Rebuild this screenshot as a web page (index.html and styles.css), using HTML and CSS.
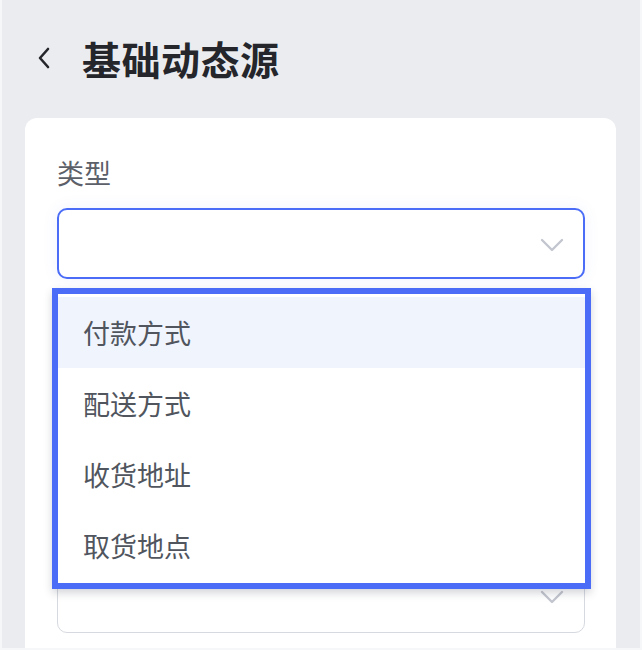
FILE: index.html
```html
<!DOCTYPE html>
<html lang="zh-CN">
<head>
  <meta charset="UTF-8" />
  <title>基础动态源</title>
  <link rel="stylesheet" href="styles.css">
</head>
<body>

<header class="topbar">
  <button class="back" aria-label="返回">
    <svg width="16" height="22" viewBox="0 0 16 22">
      <path d="M12 2 L4 11 L12 20" fill="none" stroke="#24262b" stroke-width="2.6" stroke-linecap="round" stroke-linejoin="round"/>
    </svg>
  </button>
  <h1>基础动态源</h1>
</header>

<div class="card">
  <div class="field">
    <label class="label">类型</label>
    <div class="select focused">
      <svg class="arrow" width="24" height="14" viewBox="0 0 24 14">
        <path d="M2 2 L12 12 L22 2" fill="none" stroke="#c3c6cf" stroke-width="2.4" stroke-linecap="round" stroke-linejoin="round"/>
      </svg>
    </div>
  </div>

  <div class="field field-next">
    <div class="select">
      <svg class="arrow" width="24" height="14" viewBox="0 0 24 14">
        <path d="M2 2 L12 12 L22 2" fill="none" stroke="#c3c6cf" stroke-width="2.4" stroke-linecap="round" stroke-linejoin="round"/>
      </svg>
    </div>
  </div>

  <!-- 下拉菜单 -->
  <ul class="dropdown">
    <li class="active">付款方式</li>
    <li>配送方式</li>
    <li>收货地址</li>
    <li>取货地点</li>
  </ul>
</div>

</body>
</html>
```

FILE: styles.css
```css
* {
  box-sizing: border-box;
}
body {
  margin: 0;
  width: 642px;
  height: 650px;
  overflow: hidden;
  background: #ebecf0;
  border: 2px solid #f6f7f9;
  border-top: none;
  font-family: "Noto Sans CJK SC", "Noto Sans", sans-serif;
  color: #24262b;
}
.topbar {
  display: flex;
  align-items: center;
  height: 118px;
  padding: 0 0 2px 34px;
}
.back {
  background: none;
  border: none;
  padding: 0;
  width: 16px;
  height: 22px;
  margin-right: 30px;
  display: flex;
}
.topbar h1 {
  margin: 0;
  font-size: 39px;
  font-weight: 700;
  line-height: 1;
  letter-spacing: 0.5px;
  color: #24262b;
}
.card {
  position: relative;
  background: #fff;
  margin: 0 24px 0 23px;
  border-radius: 12px 12px 0 0;
  padding: 37px 31px 40px 32px;
  height: 530px;
}
.label {
  display: block;
  font-size: 27px;
  line-height: 36px;
  color: #5c6068;
  margin-bottom: 17px;
}
.select {
  position: relative;
  height: 71px;
  border: 1px solid #d6d9e0;
  border-radius: 10px;
  background: #fff;
}
.select.focused {
  border: 2px solid #4a6cf6;
  box-shadow: 0 0 16px rgba(74, 108, 246, 0.08);
}
.arrow {
  position: absolute;
  right: 20px;
  top: 29px;
}
.focused .arrow {
  right: 19px;
  top: 28px;
}
.field-next {
  margin-top: 283px;
}
.field-next .arrow {
  top: 27px;
}
.dropdown {
  position: absolute;
  left: 27px;
  top: 170px;
  width: 539px;
  margin: 0;
  padding: 3px 0 2px;
  list-style: none;
  background: #fff;
  border: 6px solid #4a6cf6;
  box-shadow: 0 4px 8px rgba(60, 64, 80, 0.22);
}
.dropdown li {
  height: 71px;
  display: flex;
  align-items: center;
  padding-left: 25px;
  font-size: 27px;
  color: #50555e;
}
.dropdown li.active {
  background: #f0f4fd;
}
```
